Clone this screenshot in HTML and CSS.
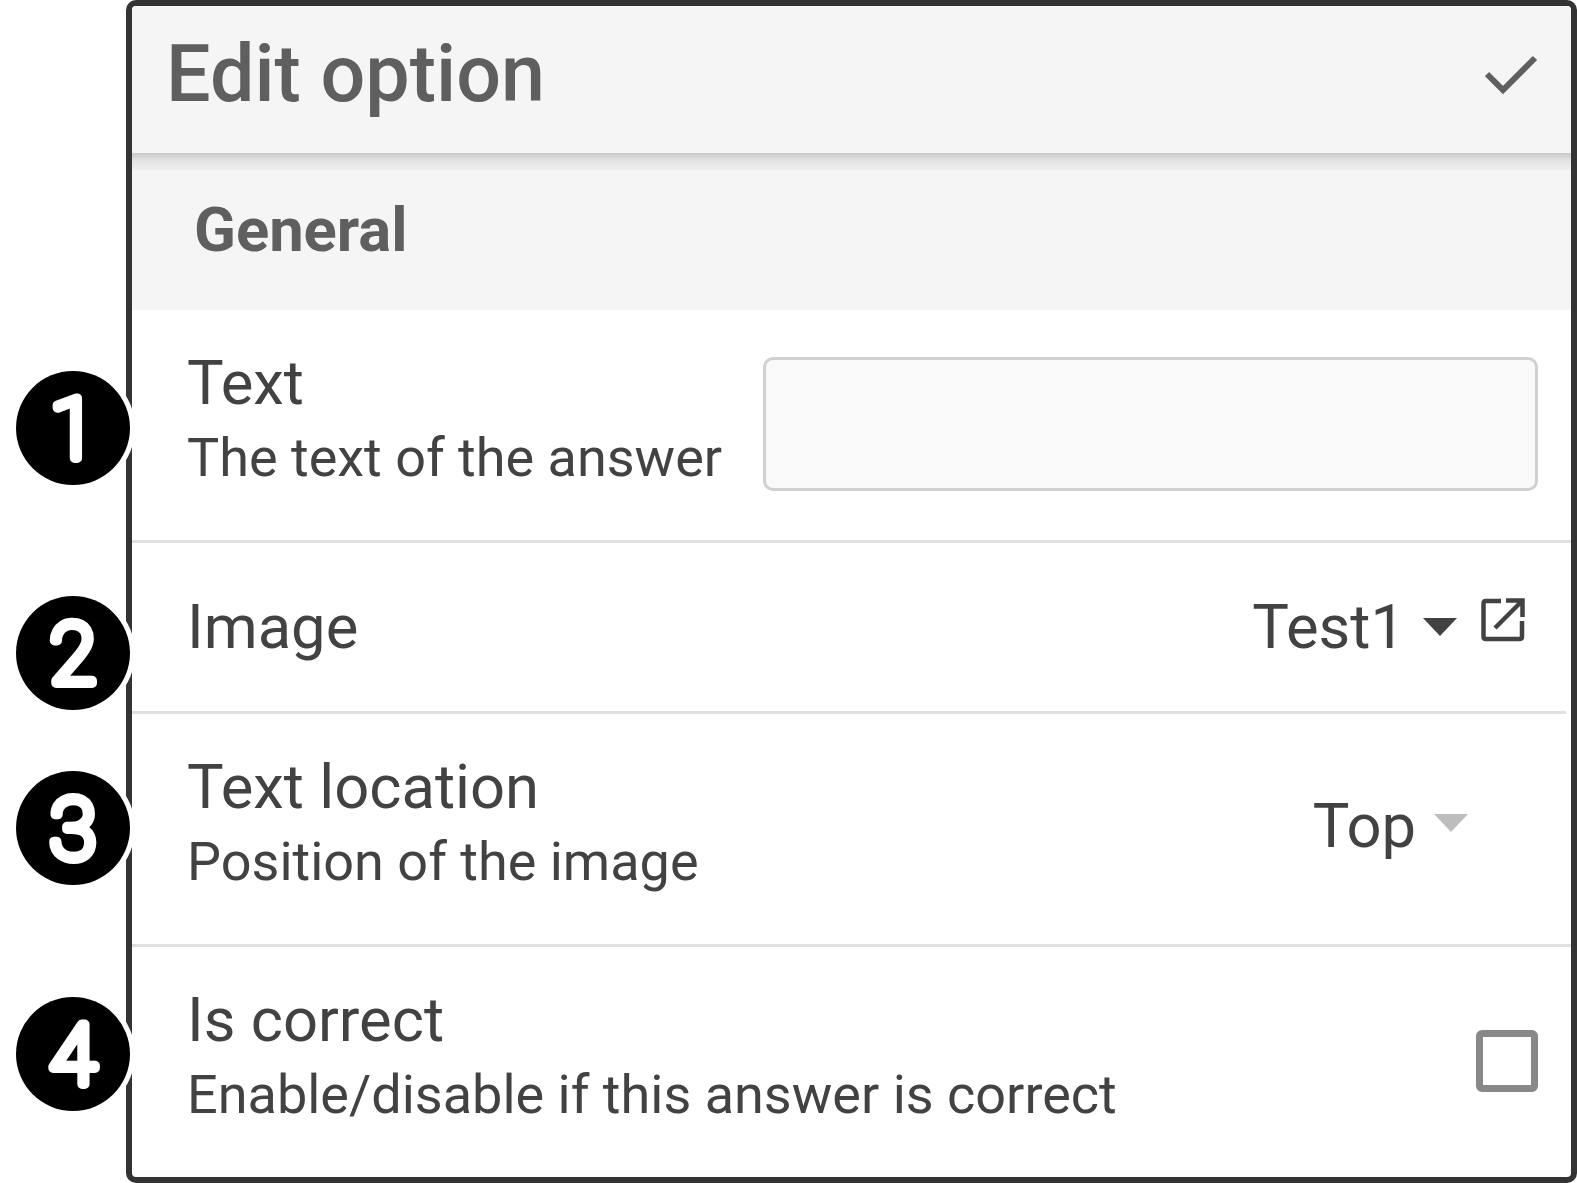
FILE: index.html
```html
<!DOCTYPE html>
<html lang="en">

<head>
    <meta charset="UTF-8">
    <title>Edit option</title>
    <link rel="stylesheet" href="styles.css">
</head>

<body>
    <section class="panel">
        <header class="panel-header">
            <h1 class="panel-title">Edit option</h1>
            <svg class="check-icon" viewBox="0 0 54 42" width="54" height="42">
                <path d="M2 21 L18 37 L50 5" fill="none" stroke="#5f5f5f" stroke-width="6" />
            </svg>
        </header>
        <h2 class="group-title">General</h2>

        <div class="row row-text">
            <svg class="badge badge-1" viewBox="0 0 114 114" width="114" height="114">
                <text x="57" y="87" class="badge-digit">1</text>
            </svg>
            <div class="labels">
                <div class="label">Text</div>
                <div class="hint">The text of the answer</div>
            </div>
            <input class="text-input" type="text">
        </div>

        <div class="row row-image">
            <svg class="badge badge-2" viewBox="0 0 114 114" width="114" height="114">
                <text x="57" y="87" class="badge-digit">2</text>
            </svg>
            <div class="labels">
                <div class="label">Image</div>
            </div>
            <div class="select">
                <span>Test1</span>
                <span class="caret"></span>
                <svg class="open-icon" viewBox="0 0 44 44" width="44" height="44">
                    <path d="M20 3 H5 Q2.500 3 2.500 5.500 V38.500 Q2.500 41 5 41 H38.500 Q41 41 41 38.500 V23" fill="none" stroke="#424242" stroke-width="4.500" />
                    <path d="M14 30 L40 4 M25 2.500 H41.500 V19" fill="none" stroke="#424242" stroke-width="4.500" />
                </svg>
            </div>
        </div>

        <div class="row row-location">
            <svg class="badge badge-3" viewBox="0 0 114 114" width="114" height="114">
                <text x="57" y="87" class="badge-digit">3</text>
            </svg>
            <div class="labels">
                <div class="label">Text location</div>
                <div class="hint">Position of the image</div>
            </div>
            <div class="select select-top">
                <span>Top</span>
                <span class="caret caret-light"></span>
            </div>
        </div>

        <div class="row row-correct">
            <svg class="badge badge-4" viewBox="0 0 114 114" width="114" height="114">
                <text x="57" y="87" class="badge-digit">4</text>
            </svg>
            <div class="labels">
                <div class="label">Is correct</div>
                <div class="hint">Enable/disable if this answer is correct</div>
            </div>
            <span class="checkbox"></span>
        </div>
    </section>
</body>

</html>
```

FILE: styles.css
```css
* {
    box-sizing: border-box;
}

body {
    margin: 0;
    background: #fff;
    font-family: Roboto, sans-serif;
    color: #424242;
}

.panel {
    margin-left: 126px;
    width: 1451px;
    height: 1183px;
    border: 6px solid #333;
    border-radius: 10px;
    background: #fff;
    display: flex;
    flex-direction: column;
}

.panel-header {
    position: relative;
    height: 147px;
    flex: none;
    display: flex;
    justify-content: space-between;
    align-items: center;
    padding: 0 32px 0 34px;
    background: #f5f5f5;
    border-radius: 4px 4px 0 0;
}

.panel-header::after {
    content: "";
    position: absolute;
    left: 0;
    right: 0;
    top: 100%;
    height: 17px;
    background: linear-gradient(#c9c9c9, #e3e3e3 45%, #efefef);
}

.panel-title {
    margin: 0 0 12px;
    font-size: 79px;
    font-weight: 500;
    color: #5f5f5f;
}

.check-icon {
    margin-bottom: 12px;
}

.group-title {
    margin: 0;
    flex: none;
    height: 157px;
    padding: 41px 0 0 62px;
    background: #f5f5f5;
    font-size: 61.500px;
    font-weight: 700;
    color: #5f5f5f;
}

.row {
    position: relative;
    flex: none;
    display: flex;
    justify-content: space-between;
    align-items: center;
    padding: 0 33px 0 55px;
    border-bottom: 3px solid #e0e0e0;
}

.row-text {
    height: 233px;
}

.row-image {
    height: 171px;
    margin-right: 5px;
    padding-right: 41px;
}

.row-location {
    height: 233px;
}

.row-correct {
    flex: 1;
    border-bottom: none;
}

.label {
    font-size: 61.500px;
    line-height: 80px;
}

.hint {
    font-size: 54px;
    line-height: 70px;
    margin-bottom: 14px;
}

.text-input {
    width: 775px;
    height: 134px;
    margin-bottom: 2px;
    border: 3px solid #d0d0d0;
    border-radius: 10px;
    background: #f9f9f9;
}

.select {
    display: flex;
    align-items: center;
    font-size: 61.500px;
}

.caret {
    width: 0;
    height: 0;
    margin: 0 24px 0 18px;
    border-left: 17px solid transparent;
    border-right: 17px solid transparent;
    border-top: 18px solid #424242;
}

.caret-light {
    border-top-color: #bdbdbd;
    margin: 0 0 6px 18px;
}

.select-top {
    margin-right: 70px;
    margin-bottom: 6px;
}

.open-icon {
    margin-bottom: 14px;
}

.checkbox {
    width: 62px;
    height: 62px;
    margin-bottom: 2px;
    border: 7px solid #888;
    border-radius: 6px;
}

.badge {
    position: absolute;
    left: -116px;
    border-radius: 50%;
    background: #000;
    box-shadow: 0 0 0 5px #fff;
}

.badge-digit {
    font-family: Roboto, sans-serif;
    font-size: 84px;
    font-weight: 100;
    text-anchor: middle;
    fill: #fff;
    stroke: #fff;
    stroke-width: 10px;
    stroke-linejoin: round;
    stroke-linecap: round;
}

.badge-1 {
    top: 61px;
}

.badge-2 {
    top: 53px;
}

.badge-3 {
    top: 57px;
}

.badge-4 {
    top: 50px;
}
```
